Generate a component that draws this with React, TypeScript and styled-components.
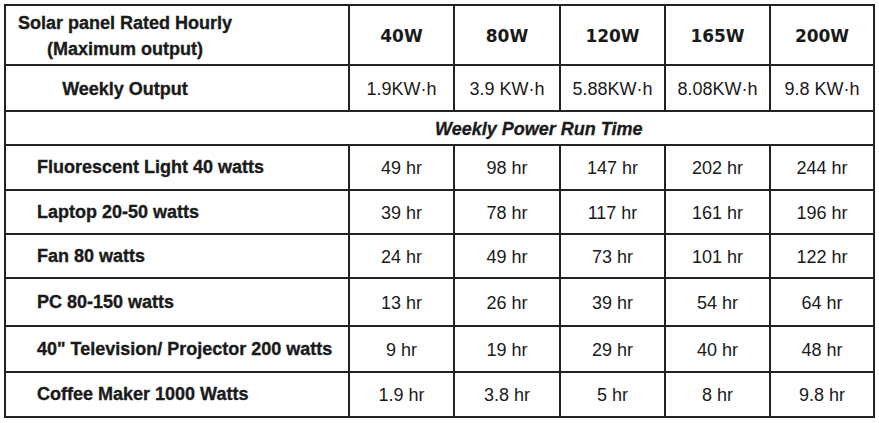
import React from 'react';
import styled, {createGlobalStyle} from "styled-components";

const GlobalStyle = createGlobalStyle`
  html, body {
    margin: 0;
    padding: 0;
    background: #ffffff;
  }
  body {
    font-family: "Liberation Sans", Arial, sans-serif;
    color: #1a1a1a;
  }
`

type RowType = {
    name: string
    height: number
    values: string[]
}

const watts = ['40W', '80W', '120W', '165W', '200W']
const weekly = ['1.9KW·h', '3.9 KW·h', '5.88KW·h', '8.08KW·h', '9.8 KW·h']

const rows: RowType[] = [
    {name: 'Fluorescent Light 40 watts', height: 45, values: ['49 hr', '98 hr', '147 hr', '202 hr', '244 hr']},
    {name: 'Laptop 20-50 watts', height: 44, values: ['39 hr', '78 hr', '117 hr', '161 hr', '196 hr']},
    {name: 'Fan 80 watts', height: 44, values: ['24 hr', '49 hr', '73 hr', '101 hr', '122 hr']},
    {name: 'PC 80-150 watts', height: 48, values: ['13 hr', '26 hr', '39 hr', '54 hr', '64 hr']},
    {name: '40" Television/ Projector 200 watts', height: 46, values: ['9 hr', '19 hr', '29 hr', '40 hr', '48 hr']},
    {name: 'Coffee Maker 1000 Watts', height: 45, values: ['1.9 hr', '3.8 hr', '5 hr', '8 hr', '9.8 hr']},
]

export default function App() {
    return (
        <Page>
            <GlobalStyle/>
            <Table>
                <Cell h={60} align="start">
                    <FirstLabel>Solar panel Rated Hourly<br/>(Maximum output)</FirstLabel>
                </Cell>
                {watts.map(w => <Cell key={w} h={60}><Watt>{w}</Watt></Cell>)}

                <Cell h={46} align="start">
                    <FirstLabel>Weekly Output</FirstLabel>
                </Cell>
                {weekly.map(v => <Cell key={v} h={46}><Value>{v}</Value></Cell>)}

                <Wide h={34}>
                    <Section>Weekly Power Run Time</Section>
                </Wide>

                {rows.map(row => (
                    <React.Fragment key={row.name}>
                        <Cell h={row.height} align="start">
                            <RowName>{row.name}</RowName>
                        </Cell>
                        {row.values.map((v, i) => <Cell key={i} h={row.height}><Value>{v}</Value></Cell>)}
                    </React.Fragment>
                ))}
            </Table>
        </Page>
    );
}

const Page = styled.div`
  padding: 4px 0 0 4px;
`

const Table = styled.div`
  display: grid;
  grid-template-columns: 344px 105px 106px 105px 105px 104px;
  width: max-content;
  border-left: 2px solid #222;
  border-top: 2px solid #222;
`

const Cell = styled.div<{ h: number, align?: string }>`
  box-sizing: border-box;
  height: ${props => props.h}px;
  border-right: 2px solid #222;
  border-bottom: 2px solid #222;
  display: flex;
  align-items: center;
  justify-content: ${props => props.align === 'start' ? 'flex-start' : 'center'};
`

const Wide = styled(Cell)`
  grid-column: 1 / -1;
  justify-content: flex-start;
`

const FirstLabel = styled.div`
  width: 238px;
  text-align: center;
  font-size: 18px;
  font-weight: bold;
  line-height: 26px;
  padding-top: 2px;
  -webkit-text-stroke: 0.35px #1a1a1a;
`

const Watt = styled.div`
  font-family: "DejaVu Sans", sans-serif;
  font-size: 17px;
  font-weight: bold;
  padding-top: 1px;
`

const Value = styled.div`
  font-size: 18px;
  font-weight: normal;
  padding-top: 2px;
`

const Section = styled.div`
  padding-left: 429px;
  font-size: 18px;
  font-weight: bold;
  font-style: italic;
  padding-top: 2px;
  -webkit-text-stroke: 0.3px #1a1a1a;
`

const RowName = styled.div`
  padding-left: 31px;
  font-size: 18px;
  font-weight: bold;
  -webkit-text-stroke: 0.35px #1a1a1a;
`
